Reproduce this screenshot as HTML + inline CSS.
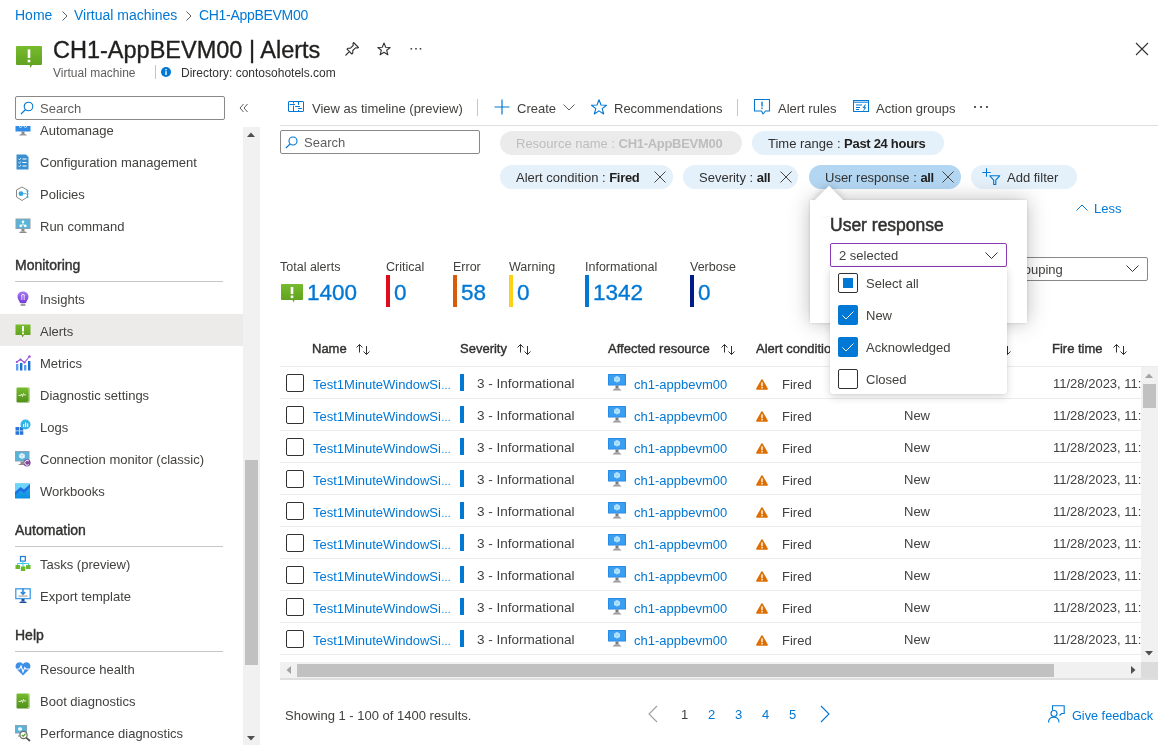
<!DOCTYPE html>
<html><head><meta charset="utf-8"><title>Alerts</title>
<style>
*{box-sizing:border-box;margin:0;padding:0}
html,body{width:1175px;height:745px;overflow:hidden;background:#fff}
body{position:relative;font-family:"Liberation Sans",sans-serif;color:#42413f;font-size:13px;-webkit-font-smoothing:antialiased}
.t{position:absolute;white-space:nowrap;line-height:16px}
.abs{position:absolute}
.blue{color:#0078d4}
.pill{position:absolute;height:24px;border-radius:12px;background:#deecf9;line-height:26px;white-space:nowrap;font-size:13px;padding-left:16px;color:#323130}
.pill b{font-weight:bold;letter-spacing:-0.3px;color:#201f1e}
.sb{-webkit-text-stroke:0.4px currentColor;color:#323130}
svg{position:absolute;overflow:visible}
</style></head><body><div id="root" style="position:absolute;left:0;top:0;width:1175px;height:745px;will-change:transform">

<div class="t blue" style="left:15px;top:7px;font-size:14px;line-height:17px">Home</div>
<svg style="left:61px;top:10px" width="8" height="12" viewBox="0 0 8 12"><path d="M1.5 1.5 L6 6 L1.5 10.5" fill="none" stroke="#605e5c" stroke-width="1"/></svg>
<div class="t blue" style="left:74px;top:7px;font-size:14px;line-height:17px">Virtual machines</div>
<svg style="left:185px;top:10px" width="8" height="12" viewBox="0 0 8 12"><path d="M1.5 1.5 L6 6 L1.5 10.5" fill="none" stroke="#605e5c" stroke-width="1"/></svg>
<div class="t blue" style="left:199px;top:7px;font-size:14px;line-height:17px;letter-spacing:-0.3px">CH1-AppBEVM00</div>
<svg style="left:16px;top:46px" width="26" height="22" viewBox="0 0 26 22"><defs><linearGradient id="g1646" x1="0" y1="0" x2="0" y2="1"><stop offset="0" stop-color="#76bc2d"/><stop offset="1" stop-color="#5e9e1e"/></linearGradient></defs><path d="M0 1 Q0 0 1 0 H25 Q26 0 26 1 V18 Q26 19 25 19 H16.1 L14.3 22 L13.8 19 H1 Q0 19 0 18 Z" fill="url(#g1646)"/><rect x="11.7" y="3.4" width="2.6" height="8.6" fill="#fff"/><rect x="11.7" y="13.7" width="2.6" height="2.6" fill="#fff"/></svg>
<div class="t" style="left:53px;top:36px;font-size:23.5px;line-height:28px;color:#201f1e;-webkit-text-stroke:0.35px #201f1e">CH1-AppBEVM00 | Alerts</div>
<svg style="left:344px;top:41px" width="16" height="16" viewBox="0 0 16 16"><path d="M9.5 1.5 L14.5 6.5 L13.5 7 L11.5 6.8 L8.8 9.5 L8.8 12 L7.8 13 L3 8.2 L4 7.2 L6.5 7.2 L9.2 4.5 L9 2.5 Z M5.3 10.7 L1.5 14.5" fill="none" stroke="#323130" stroke-width="1.1" stroke-linejoin="round"/></svg>
<svg style="left:377px;top:42px" width="14" height="14" viewBox="0 0 14 14"><path d="M7 1 L8.7 5.2 L13.2 5.5 L9.7 8.3 L10.9 12.8 L7 10.3 L3.1 12.8 L4.3 8.3 L0.8 5.5 L5.3 5.2 Z" fill="none" stroke="#323130" stroke-width="1.1" stroke-linejoin="round"/></svg>
<svg style="left:410px;top:48px" width="12" height="2" viewBox="0 0 12 2"><rect x="0.5" y="0" width="1.6" height="1.6" fill="#484644"/><rect x="5.2" y="0" width="1.6" height="1.6" fill="#484644"/><rect x="9.7" y="0" width="1.6" height="1.6" fill="#484644"/></svg>
<svg style="left:1135px;top:42px" width="14" height="14" viewBox="0 0 14 14"><path d="M1 1 L13 13 M13 1 L1 13" stroke="#323130" stroke-width="1.1"/></svg>
<div class="t" style="left:53px;top:66px;font-size:12px;line-height:15px;color:#605e5c">Virtual machine</div>
<div class="abs" style="left:155px;top:65px;width:1px;height:14px;background:#c8c6c4"></div>
<svg style="left:161px;top:67px" width="10" height="10" viewBox="0 0 10 10"><circle cx="5" cy="5" r="5" fill="#0078d4"/><rect x="4.3" y="4.2" width="1.4" height="3.8" fill="#fff"/><rect x="4.3" y="2" width="1.4" height="1.4" fill="#fff"/></svg>
<div class="t" style="left:181px;top:66px;font-size:12px;line-height:15px;color:#323130">Directory: contosohotels.com</div>
<div class="abs" style="left:15px;top:96px;width:210px;height:24px;border:1px solid #8a8886;border-radius:2px"></div>
<svg style="left:20px;top:101px" width="14" height="14" viewBox="0 0 14 14"><circle cx="8.5" cy="5.5" r="4.3" fill="none" stroke="#0078d4" stroke-width="1.1"/><path d="M5.4 8.6 L1 13" stroke="#0078d4" stroke-width="1.2"/></svg>
<div class="t" style="left:40px;top:101px;font-size:13px;color:#605e5c">Search</div>
<svg style="left:239px;top:103px" width="10" height="10" viewBox="0 0 10 10"><path d="M4.5 1 L1 5 L4.5 9 M8.5 1 L5 5 L8.5 9" fill="none" stroke="#605e5c" stroke-width="1"/></svg>
<div class="abs" style="left:243px;top:127px;width:17px;height:618px;background:#f1f1f1"></div>
<div class="abs" style="left:245px;top:460px;width:13px;height:205px;background:#c1c1c1"></div>
<svg style="left:247px;top:132px" width="8" height="5" viewBox="0 0 8 5"><path d="M0 5 L4 0.5 L8 5 Z" fill="#505050"/></svg>
<svg style="left:247px;top:736px" width="8" height="5" viewBox="0 0 8 5"><path d="M0 0 L4 4.5 L8 0 Z" fill="#505050"/></svg>
<div class="abs" style="left:0;top:314px;width:243px;height:32px;background:#edebe9"></div>
<svg style="left:15px;top:122px" width="16" height="16" viewBox="0 0 16 16"><rect x="0.5" y="0" width="15" height="9.5" fill="#2f8be6"/><path d="M3 2.5 L5.5 6 L8 3 L10.5 6 L13 2.5" stroke="#c3e3ff" stroke-width="1" fill="none"/><rect x="6.5" y="9.5" width="3" height="2.5" fill="#8a8a8a"/><path d="M4 13.5 L5.5 12 H10.5 L12 13.5 Z" fill="#9a9a9a"/></svg>
<div class="t" style="left:40px;top:123px;font-size:13px">Automanage</div>
<svg style="left:15px;top:154px" width="16" height="16" viewBox="0 0 16 16"><path d="M1.5 0.5 H11 L13.5 3 V15.5 H1.5 Z" fill="#3a8fd0"/><path d="M3.5 4.8 L4.5 5.8 L6 4 M3.5 8.3 L4.5 9.3 L6 7.5 M3.5 11.8 L4.5 12.8 L6 11" stroke="#fff" stroke-width="0.8" fill="none"/><path d="M7.5 5 H11.5 M7.5 8.5 H11.5 M7.5 12 H11.5" stroke="#fff" stroke-width="1"/></svg>
<div class="t" style="left:40px;top:155px;font-size:13px">Configuration management</div>
<svg style="left:15px;top:186px" width="16" height="16" viewBox="0 0 16 16"><path d="M7 1 L12.5 4 V11 L7 14.5 L1.5 11 V4 Z" fill="none" stroke="#8a8a8a" stroke-width="1"/><circle cx="6" cy="7.7" r="2.4" fill="#32a8e0"/><path d="M8 7.7 H11" stroke="#32a8e0" stroke-width="0.8"/><circle cx="12.5" cy="5" r="1.1" fill="#32a8e0"/><circle cx="12.5" cy="8" r="1.1" fill="#32a8e0"/><circle cx="12.5" cy="11" r="1.1" fill="#32a8e0"/></svg>
<div class="t" style="left:40px;top:187px;font-size:13px">Policies</div>
<svg style="left:15px;top:218px" width="16" height="16" viewBox="0 0 16 16"><rect x="0.5" y="0.5" width="15" height="10.5" fill="#9aa0a6"/><rect x="1.3" y="1.3" width="13.4" height="9" fill="#59b4d9"/><circle cx="8" cy="3.8" r="1.3" fill="#fff"/><circle cx="5.8" cy="7.8" r="1.4" fill="#fff"/><circle cx="10.2" cy="7.8" r="1.4" fill="#fff"/><path d="M8 5 V6.5 L6.5 7.5 M8 6.5 L9.5 7.5" stroke="#fff" stroke-width="0.7" fill="none"/><rect x="6.5" y="11" width="3" height="2.5" fill="#8a8a8a"/><path d="M4 15 L5.5 13.5 H10.5 L12 15 Z" fill="#8a8a8a"/></svg>
<div class="t" style="left:40px;top:219px;font-size:13px">Run command</div>
<svg style="left:15px;top:291px" width="16" height="16" viewBox="0 0 16 16"><defs><linearGradient id="ins" x1="0" y1="0" x2="0" y2="1"><stop offset="0" stop-color="#a77af4"/><stop offset="1" stop-color="#773adc"/></linearGradient></defs><path d="M8 0.5 C4.5 0.5 2.5 3 2.5 5.8 C2.5 8.5 4.5 10 5 12 H11 C11.5 10 13.5 8.5 13.5 5.8 C13.5 3 11.5 0.5 8 0.5 Z" fill="url(#ins)"/><rect x="5.5" y="12.5" width="5" height="2.6" rx="1" fill="#a0a0a0"/><path d="M6.5 4.5 C6.5 3 9.5 3 9.5 4.5 M6.8 4 V9 M9.2 4 V9" stroke="#fff" stroke-width="0.8" fill="none"/></svg>
<div class="t" style="left:40px;top:292px;font-size:13px">Insights</div>
<svg style="left:15px;top:323px" width="16" height="16" viewBox="0 0 16 16"><defs><linearGradient id="alg" x1="0" y1="0" x2="0" y2="1"><stop offset="0" stop-color="#76bc2d"/><stop offset="1" stop-color="#5e9e1e"/></linearGradient></defs><path d="M0.5 1.5 H15.5 V12 H9 L7.5 14.5 L6.5 12 H0.5 Z" fill="url(#alg)"/><rect x="7" y="3" width="2" height="5.5" fill="#fff"/><rect x="7" y="9.5" width="2" height="1.8" fill="#fff"/></svg>
<div class="t" style="left:40px;top:324px;font-size:13px">Alerts</div>
<svg style="left:15px;top:355px" width="16" height="16" viewBox="0 0 16 16"><rect x="1" y="9" width="2.4" height="6.5" fill="#5ea0ef"/><rect x="5" y="8" width="2.4" height="7.5" fill="#1e6fd0"/><rect x="9" y="10" width="2.4" height="5.5" fill="#5ea0ef"/><rect x="13" y="6" width="2.4" height="9.5" fill="#1e6fd0"/><path d="M1.5 7 L5.5 4.5 L9.5 7.5 L14.5 1.5" stroke="#9b4fd6" stroke-width="1.1" fill="none"/><circle cx="1.8" cy="7" r="1.1" fill="#9b4fd6"/><circle cx="5.5" cy="4.5" r="1.1" fill="#9b4fd6"/><circle cx="9.5" cy="7.5" r="1.1" fill="#9b4fd6"/><circle cx="14.5" cy="1.5" r="1.2" fill="#9b4fd6"/></svg>
<div class="t" style="left:40px;top:356px;font-size:13px">Metrics</div>
<svg style="left:15px;top:387px" width="16" height="16" viewBox="0 0 16 16"><defs><linearGradient id="dg" x1="0" y1="0" x2="0" y2="1"><stop offset="0" stop-color="#76bc2d"/><stop offset="1" stop-color="#4f8f1a"/></linearGradient></defs><rect x="1.5" y="0.5" width="13" height="15" rx="1" fill="url(#dg)"/><path d="M12.5 1.5 H14 V14.5 H12.5" stroke="#b5e08a" stroke-width="0.9" fill="none"/><path d="M3.5 8.5 L5.5 8.5 L6.5 7 L7.5 9.5 L8.5 6.5 L9.5 8 L11 8" stroke="#fff" stroke-width="0.8" fill="none"/></svg>
<div class="t" style="left:40px;top:388px;font-size:13px">Diagnostic settings</div>
<svg style="left:15px;top:419px" width="16" height="16" viewBox="0 0 16 16"><rect x="0.5" y="8" width="3.6" height="3.6" fill="#2a75d8"/><rect x="4.7" y="8" width="3.6" height="3.6" fill="#2a75d8"/><rect x="0.5" y="12.2" width="3.6" height="3.6" fill="#2a75d8"/><rect x="4.7" y="12.2" width="3.6" height="3.6" fill="#2a75d8"/><circle cx="10.5" cy="5.5" r="5" fill="#32b5e8"/><rect x="8" y="5" width="1.2" height="3" fill="#fff"/><rect x="10" y="3.5" width="1.2" height="4.5" fill="#fff"/><rect x="12" y="4.5" width="1.2" height="3.5" fill="#fff"/></svg>
<div class="t" style="left:40px;top:420px;font-size:13px">Logs</div>
<svg style="left:15px;top:451px" width="16" height="16" viewBox="0 0 16 16"><rect x="0" y="0" width="14.5" height="10.5" fill="#9aa0a6"/><rect x="0.8" y="0.8" width="13" height="9" fill="#59b4d9"/><path d="M7 2 L9.8 3.4 V6.6 L7 8 L4.2 6.6 V3.4 Z" fill="#e8f4ff"/><path d="M4.2 3.4 L7 4.8 L9.8 3.4 M7 4.8 V8" stroke="#a8d4ec" stroke-width="0.6" fill="none"/><rect x="5.5" y="10.5" width="3" height="2.5" fill="#8a8a8a"/><path d="M3 14 L4.5 13 H9.5 L10 14 Z" fill="#8a8a8a"/><circle cx="12" cy="11.8" r="3.6" fill="#804998"/><path d="M13.8 10 A2.4 2.4 0 1 0 13.8 13.6" stroke="#fff" stroke-width="1" fill="none"/></svg>
<div class="t" style="left:40px;top:452px;font-size:13px">Connection monitor (classic)</div>
<svg style="left:15px;top:483px" width="16" height="16" viewBox="0 0 16 16"><defs><linearGradient id="wb" x1="0" y1="0" x2="0" y2="1"><stop offset="0" stop-color="#28b4f0"/><stop offset="1" stop-color="#0d8ee0"/></linearGradient></defs><rect x="0" y="0.5" width="15" height="15" fill="url(#wb)"/><path d="M0 0.5 H15 V1.5 L9 7 L5.5 5 L0 10 Z" fill="#6fd6fa"/><path d="M0 9 L5.5 4 L9 6.5 L15 1 V4.5 L9 10 L5.5 7.5 L0 12.5 Z" fill="#1f6fe0"/></svg>
<div class="t" style="left:40px;top:484px;font-size:13px">Workbooks</div>
<svg style="left:15px;top:556px" width="16" height="16" viewBox="0 0 16 16"><rect x="5.5" y="0.5" width="4.8" height="4.6" fill="none" stroke="#1f78d8" stroke-width="1.2"/><path d="M8 5 V11 M2.5 10 V7.5 H13.5 V10" stroke="#38c8f0" stroke-width="1" fill="none"/><rect x="0.5" y="9" width="4.5" height="4" fill="#6bb830"/><rect x="5.8" y="10.5" width="4.5" height="4.5" fill="#6bb830"/><rect x="11" y="9" width="4.5" height="4" fill="#6bb830"/></svg>
<div class="t" style="left:40px;top:557px;font-size:13px">Tasks (preview)</div>
<svg style="left:15px;top:588px" width="16" height="16" viewBox="0 0 16 16"><rect x="0.8" y="0.8" width="14.4" height="9.8" fill="#fff" stroke="#3c9be8" stroke-width="1.3"/><path d="M8 0.5 V6 M5.8 4 L8 6.3 L10.2 4" stroke="#2c8be0" stroke-width="1.6" fill="none"/><rect x="3.5" y="7.5" width="9" height="1.2" fill="#b0a8a0"/><rect x="6.5" y="11" width="3" height="2.5" fill="#1d4fa0"/><path d="M4 15 L5.5 13.5 H10.5 L12 15 Z" fill="#1d4fa0"/></svg>
<div class="t" style="left:40px;top:589px;font-size:13px">Export template</div>
<svg style="left:15px;top:661px" width="16" height="16" viewBox="0 0 16 16"><path d="M8 14.5 L1.8 8.3 C-0.3 6.2 0.3 1.8 4 1.2 C6 0.9 7.2 2 8 3 C8.8 2 10 0.9 12 1.2 C15.7 1.8 16.3 6.2 14.2 8.3 Z" fill="#3e8fe8"/><path d="M1.5 8 H4.5 L6 5 L8 11 L9.8 6.5 L11 8 H14.5" stroke="#fff" stroke-width="1.1" fill="none"/></svg>
<div class="t" style="left:40px;top:662px;font-size:13px">Resource health</div>
<svg style="left:15px;top:693px" width="16" height="16" viewBox="0 0 16 16"><defs><linearGradient id="dg" x1="0" y1="0" x2="0" y2="1"><stop offset="0" stop-color="#76bc2d"/><stop offset="1" stop-color="#4f8f1a"/></linearGradient></defs><rect x="1.5" y="0.5" width="13" height="15" rx="1" fill="url(#dg)"/><path d="M12.5 1.5 H14 V14.5 H12.5" stroke="#b5e08a" stroke-width="0.9" fill="none"/><path d="M3.5 8.5 L5.5 8.5 L6.5 7 L7.5 9.5 L8.5 6.5 L9.5 8 L11 8" stroke="#fff" stroke-width="0.8" fill="none"/></svg>
<div class="t" style="left:40px;top:694px;font-size:13px">Boot diagnostics</div>
<svg style="left:15px;top:725px" width="16" height="16" viewBox="0 0 16 16"><rect x="0" y="0" width="12" height="8.5" fill="#9aa0a6"/><rect x="0.7" y="0.7" width="10.6" height="7.1" fill="#59b4d9"/><path d="M5 2 L7 3 V5 L5 6 L3 5 V3 Z" fill="#e8f4ff"/><rect x="3" y="10.5" width="3" height="1" fill="#8a8a8a"/><circle cx="8.5" cy="10" r="3.6" fill="#fff" stroke="#6b6b6b" stroke-width="1.2"/><path d="M11.2 12.7 L15 16" stroke="#505050" stroke-width="1.7"/><path d="M6.8 10 L8.2 11.3 L10.5 8.8" stroke="#5ea72e" stroke-width="1.3" fill="none"/></svg>
<div class="t" style="left:40px;top:726px;font-size:13px">Performance diagnostics</div>
<div class="abs" style="left:0;top:120px;width:243px;height:6px;background:#fff"></div>
<div class="t sb" style="left:15px;top:257px;font-size:14px">Monitoring</div>
<div class="abs" style="left:15px;top:281px;width:208px;height:1px;background:#c8c6c4"></div>
<div class="t sb" style="left:15px;top:522px;font-size:14px">Automation</div>
<div class="abs" style="left:15px;top:546px;width:208px;height:1px;background:#c8c6c4"></div>
<div class="t sb" style="left:15px;top:627px;font-size:14px">Help</div>
<div class="abs" style="left:15px;top:651px;width:208px;height:1px;background:#c8c6c4"></div>
<svg style="left:288px;top:101px" width="16" height="11" viewBox="0 0 16 11"><rect x="0.5" y="0.5" width="15" height="10" rx="0.5" fill="none" stroke="#0078d4" stroke-width="1"/><path d="M5.5 0.5 V2 M5.5 5 V10.5 M10.5 0.5 V3.5 M10.5 9.5 V10.5 M2 3.5 H6.5 M7.5 5.5 H11.5 M10.5 7.5 H13.5" stroke="#0078d4" stroke-width="1" fill="none" stroke-linecap="round"/></svg>
<div class="t" style="left:312px;top:101px">View as timeline (preview)</div>
<div class="abs" style="left:477px;top:99px;width:1px;height:17px;background:#c8c6c4"></div>
<svg style="left:494px;top:99px" width="16" height="16" viewBox="0 0 16 16"><path d="M8 0.5 V15.5 M0.5 8 H15.5" stroke="#0078d4" stroke-width="1.2"/></svg>
<div class="t" style="left:517px;top:101px">Create</div>
<svg style="left:563px;top:104px" width="12" height="7" viewBox="0 0 12 7"><path d="M0.5 0.5 L6 6 L11.5 0.5" fill="none" stroke="#605e5c" stroke-width="1"/></svg>
<svg style="left:591px;top:99px" width="16" height="16" viewBox="0 0 16 16"><path d="M8 0.8 L10 6 L15.5 6.2 L11.2 9.6 L12.7 15 L8 11.9 L3.3 15 L4.8 9.6 L0.5 6.2 L6 6 Z" fill="none" stroke="#0078d4" stroke-width="1.1" stroke-linejoin="round"/></svg>
<div class="t" style="left:614px;top:101px">Recommendations</div>
<div class="abs" style="left:737px;top:99px;width:1px;height:17px;background:#c8c6c4"></div>
<svg style="left:753px;top:98px" width="18" height="18" viewBox="0 0 18 18"><path d="M1.5 1.5 H16.5 V13 H12.5 L10 16 L8.5 13 H1.5 Z" fill="none" stroke="#0078d4" stroke-width="1.1" stroke-linejoin="round"/><path d="M9 3.8 V8.5" stroke="#0078d4" stroke-width="1.4"/><rect x="8.3" y="9.6" width="1.4" height="1.5" fill="#0078d4"/></svg>
<div class="t" style="left:778px;top:101px">Alert rules</div>
<svg style="left:853px;top:100px" width="16" height="13" viewBox="0 0 16 13"><rect x="0.5" y="0.5" width="15" height="11" fill="none" stroke="#0078d4" stroke-width="1"/><path d="M0.5 2.2 H15.5" stroke="#0078d4" stroke-width="1"/><path d="M3 5 H9 M3 7.5 H7 M3 9.5 H6" stroke="#0078d4" stroke-width="1"/><path d="M12 4.5 L9.5 8 H11.5 L9.5 12 L13.5 7.2 H11.5 L13 4.5 Z" fill="#0078d4"/></svg>
<div class="t" style="left:876px;top:101px">Action groups</div>
<svg style="left:974px;top:106px" width="14" height="2" viewBox="0 0 14 2"><rect x="0" y="0" width="2" height="2" fill="#605e5c"/><rect x="6" y="0" width="2" height="2" fill="#605e5c"/><rect x="12" y="0" width="2" height="2" fill="#605e5c"/></svg>
<div class="abs" style="left:280px;top:125px;width:878px;height:1px;background:#e1dfdd"></div>
<div class="abs" style="left:280px;top:130px;width:200px;height:24px;border:1px solid #8a8886;border-radius:2px"></div>
<svg style="left:285px;top:136px" width="13" height="13" viewBox="0 0 13 13"><circle cx="8" cy="5" r="4" fill="none" stroke="#0078d4" stroke-width="1.1"/><path d="M5.1 7.9 L1 12" stroke="#0078d4" stroke-width="1.2"/></svg>
<div class="t" style="left:304px;top:135px;color:#605e5c">Search</div>
<div class="pill" style="left:500px;top:131px;width:242px;background:#ebebeb;color:#bdbdbd">Resource name : <b style="color:#bdbdbd">CH1-AppBEVM00</b></div>
<div class="pill" style="left:752px;top:131px;width:192px;background:#e4f0fa">Time range : <b>Past 24 hours</b></div>
<div class="pill" style="left:500px;top:165px;width:173px;background:#e4f0fa">Alert condition : <b>Fired</b></div>
<svg style="left:654px;top:171px" width="12" height="12" viewBox="0 0 12 12"><path d="M0.5 0.5 L11.5 11.5 M11.5 0.5 L0.5 11.5" stroke="#484644" stroke-width="1"/></svg>
<div class="pill" style="left:683px;top:165px;width:115px;background:#e4f0fa">Severity : <b>all</b></div>
<svg style="left:780px;top:171px" width="12" height="12" viewBox="0 0 12 12"><path d="M0.5 0.5 L11.5 11.5 M11.5 0.5 L0.5 11.5" stroke="#484644" stroke-width="1"/></svg>
<div class="pill" style="left:809px;top:165px;width:152px;background:#b3d6f2">User response : <b>all</b></div>
<svg style="left:942px;top:171px" width="12" height="12" viewBox="0 0 12 12"><path d="M0.5 0.5 L11.5 11.5 M11.5 0.5 L0.5 11.5" stroke="#484644" stroke-width="1"/></svg>
<div class="pill" style="left:971px;top:165px;width:106px;background:#e4f0fa;padding-left:36px">Add filter</div>
<svg style="left:982px;top:168px" width="19" height="17" viewBox="0 0 19 17"><path d="M4.5 0.3 V8.7 M0.3 4.5 H8.7" stroke="#0078d4" stroke-width="1.1"/><path d="M7.8 7.8 H17.7 L13.8 12.2 V16.5 H11.7 V12.2 Z" fill="none" stroke="#0078d4" stroke-width="1.1" stroke-linejoin="round"/></svg>
<svg style="left:1076px;top:204px" width="12" height="7" viewBox="0 0 12 7"><path d="M0.5 6.5 L6 1 L11.5 6.5" fill="none" stroke="#0078d4" stroke-width="1"/></svg>
<div class="t blue" style="left:1094px;top:201px">Less</div>
<div class="t" style="left:280px;top:260px;font-size:12.5px;line-height:15px">Total alerts</div>
<svg style="left:281px;top:284px" width="22" height="18.5" viewBox="0 0 22 18.5"><defs><linearGradient id="g281284" x1="0" y1="0" x2="0" y2="1"><stop offset="0" stop-color="#76bc2d"/><stop offset="1" stop-color="#5e9e1e"/></linearGradient></defs><path d="M0 1 Q0 0 1 0 H21 Q22 0 22 1 V15 Q22 16 21 16 H13.6 L12.1 18.5 L11.7 16 H1 Q0 16 0 15 Z" fill="url(#g281284)"/><rect x="9.7" y="2.9" width="2.6" height="7.2" fill="#fff"/><rect x="9.7" y="11.5" width="2.6" height="2.6" fill="#fff"/></svg>
<div class="t blue" style="left:307px;top:280px;font-size:22.5px;line-height:26px;-webkit-text-stroke:0.35px #0078d4">1400</div>
<div class="t" style="left:386px;top:260px;font-size:12.5px;line-height:15px">Critical</div>
<div class="abs" style="left:386px;top:275px;width:4px;height:32px;background:#e00b1c"></div>
<div class="t blue" style="left:394px;top:280px;font-size:22.5px;line-height:26px;-webkit-text-stroke:0.35px #0078d4">0</div>
<div class="t" style="left:453px;top:260px;font-size:12.5px;line-height:15px">Error</div>
<div class="abs" style="left:453px;top:275px;width:4px;height:32px;background:#d85b0b"></div>
<div class="t blue" style="left:461px;top:280px;font-size:22.5px;line-height:26px;-webkit-text-stroke:0.35px #0078d4">58</div>
<div class="t" style="left:509px;top:260px;font-size:12.5px;line-height:15px">Warning</div>
<div class="abs" style="left:509px;top:275px;width:4px;height:32px;background:#fcd116"></div>
<div class="t blue" style="left:517px;top:280px;font-size:22.5px;line-height:26px;-webkit-text-stroke:0.35px #0078d4">0</div>
<div class="t" style="left:585px;top:260px;font-size:12.5px;line-height:15px">Informational</div>
<div class="abs" style="left:585px;top:275px;width:4px;height:32px;background:#0078d4"></div>
<div class="t blue" style="left:593px;top:280px;font-size:22.5px;line-height:26px;-webkit-text-stroke:0.35px #0078d4">1342</div>
<div class="t" style="left:690px;top:260px;font-size:12.5px;line-height:15px">Verbose</div>
<div class="abs" style="left:690px;top:275px;width:4px;height:32px;background:#001c8a"></div>
<div class="t blue" style="left:698px;top:280px;font-size:22.5px;line-height:26px;-webkit-text-stroke:0.35px #0078d4">0</div>
<div class="abs" style="left:982px;top:257px;width:166px;height:24px;border:1px solid #8a8886;border-radius:2px"></div>
<div class="t" style="left:992px;top:262px">No grouping</div>
<svg style="left:1126px;top:265px" width="13" height="8" viewBox="0 0 13 8"><path d="M0.5 0.5 L6.5 6.5 L12.5 0.5" fill="none" stroke="#323130" stroke-width="1"/></svg>
<div class="t sb" style="left:312px;top:341px;font-size:13px">Name</div>
<svg style="left:355px;top:344px" width="17" height="12" viewBox="0 0 17 12"><path d="M4.5 0.5 V8.5 M1.5 3.5 L4.5 0.5 L7.5 3.5" fill="none" stroke="#323130" stroke-width="1"/><path d="M11.5 2 V10.5 M8.5 7.5 L11.5 10.5 L14.5 7.5" fill="none" stroke="#323130" stroke-width="1"/></svg>
<div class="t sb" style="left:460px;top:341px;font-size:13px">Severity</div>
<svg style="left:516px;top:344px" width="17" height="12" viewBox="0 0 17 12"><path d="M4.5 0.5 V8.5 M1.5 3.5 L4.5 0.5 L7.5 3.5" fill="none" stroke="#323130" stroke-width="1"/><path d="M11.5 2 V10.5 M8.5 7.5 L11.5 10.5 L14.5 7.5" fill="none" stroke="#323130" stroke-width="1"/></svg>
<div class="t sb" style="left:608px;top:341px;font-size:13px">Affected resource</div>
<svg style="left:720px;top:344px" width="17" height="12" viewBox="0 0 17 12"><path d="M4.5 0.5 V8.5 M1.5 3.5 L4.5 0.5 L7.5 3.5" fill="none" stroke="#323130" stroke-width="1"/><path d="M11.5 2 V10.5 M8.5 7.5 L11.5 10.5 L14.5 7.5" fill="none" stroke="#323130" stroke-width="1"/></svg>
<div class="t sb" style="left:756px;top:341px;font-size:13px">Alert condition</div>
<svg style="left:856px;top:344px" width="17" height="12" viewBox="0 0 17 12"><path d="M4.5 0.5 V8.5 M1.5 3.5 L4.5 0.5 L7.5 3.5" fill="none" stroke="#323130" stroke-width="1"/><path d="M11.5 2 V10.5 M8.5 7.5 L11.5 10.5 L14.5 7.5" fill="none" stroke="#323130" stroke-width="1"/></svg>
<div class="t sb" style="left:904px;top:341px;font-size:13px">User response</div>
<svg style="left:996px;top:344px" width="17" height="12" viewBox="0 0 17 12"><path d="M4.5 0.5 V8.5 M1.5 3.5 L4.5 0.5 L7.5 3.5" fill="none" stroke="#323130" stroke-width="1"/><path d="M11.5 2 V10.5 M8.5 7.5 L11.5 10.5 L14.5 7.5" fill="none" stroke="#323130" stroke-width="1"/></svg>
<div class="t sb" style="left:1052px;top:341px;font-size:13px">Fire time</div>
<svg style="left:1112px;top:344px" width="17" height="12" viewBox="0 0 17 12"><path d="M4.5 0.5 V8.5 M1.5 3.5 L4.5 0.5 L7.5 3.5" fill="none" stroke="#323130" stroke-width="1"/><path d="M11.5 2 V10.5 M8.5 7.5 L11.5 10.5 L14.5 7.5" fill="none" stroke="#323130" stroke-width="1"/></svg>
<div class="abs" style="left:280px;top:366px;width:878px;height:1px;background:#edebe9"></div>
<div class="abs" style="left:280px;top:367px;width:861px;height:295px;overflow:hidden">
<div class="abs" style="left:6px;top:7px;width:18px;height:18px;border:1.5px solid #323130;border-radius:2px"></div>
<div class="t blue" style="left:33px;top:10px">Test1MinuteWindowSi<span style="font-size:10px">&hellip;</span></div>
<div class="abs" style="left:180px;top:7px;width:4px;height:17px;background:#0078d4"></div>
<div class="t" style="left:197px;top:9px;font-size:13.5px">3 - Informational</div>
<svg style="left:328px;top:7px" width="18" height="17" viewBox="0 0 18 17"><rect x="0" y="0" width="18" height="11.5" rx="0.6" fill="#1e88e5"/><rect x="0.8" y="0.8" width="16.4" height="9.9" fill="#3a9ff0"/><path d="M9 2 L12 3.5 V7 L9 8.6 L6 7 V3.5 Z" fill="#b8e4ff"/><path d="M6 3.5 L9 5 L12 3.5 M9 5 V8.6" stroke="#7cc9f5" stroke-width="0.6" fill="none"/><rect x="7.5" y="11.5" width="3" height="3" fill="#7a7a7a"/><path d="M4.5 16.5 L6.5 14.5 H11.5 L13.5 16.5 Z" fill="#9a9a9a"/></svg>
<div class="t blue" style="left:354px;top:10px">ch1-appbevm00</div>
<svg style="left:476px;top:12px" width="12" height="11" viewBox="0 0 12 11"><path d="M6 0.3 Q6.5 0.3 6.8 0.8 L11.8 9.6 Q12 10.7 11 10.7 H1 Q0 10.7 0.2 9.6 L5.2 0.8 Q5.5 0.3 6 0.3 Z" fill="#db6f00"/><rect x="5.3" y="3.3" width="1.4" height="4" fill="#fff"/><rect x="5.3" y="8.1" width="1.4" height="1.4" fill="#fff"/></svg>
<div class="t" style="left:502px;top:10px">Fired</div>
<div class="t" style="left:624px;top:9px">New</div>
<div class="t" style="left:773px;top:9px">11/28/2023, 11:00 AM</div>
<div class="abs" style="left:0;top:31px;width:861px;height:1px;background:#edebe9"></div>
<div class="abs" style="left:6px;top:39px;width:18px;height:18px;border:1.5px solid #323130;border-radius:2px"></div>
<div class="t blue" style="left:33px;top:42px">Test1MinuteWindowSi<span style="font-size:10px">&hellip;</span></div>
<div class="abs" style="left:180px;top:39px;width:4px;height:17px;background:#0078d4"></div>
<div class="t" style="left:197px;top:41px;font-size:13.5px">3 - Informational</div>
<svg style="left:328px;top:39px" width="18" height="17" viewBox="0 0 18 17"><rect x="0" y="0" width="18" height="11.5" rx="0.6" fill="#1e88e5"/><rect x="0.8" y="0.8" width="16.4" height="9.9" fill="#3a9ff0"/><path d="M9 2 L12 3.5 V7 L9 8.6 L6 7 V3.5 Z" fill="#b8e4ff"/><path d="M6 3.5 L9 5 L12 3.5 M9 5 V8.6" stroke="#7cc9f5" stroke-width="0.6" fill="none"/><rect x="7.5" y="11.5" width="3" height="3" fill="#7a7a7a"/><path d="M4.5 16.5 L6.5 14.5 H11.5 L13.5 16.5 Z" fill="#9a9a9a"/></svg>
<div class="t blue" style="left:354px;top:42px">ch1-appbevm00</div>
<svg style="left:476px;top:44px" width="12" height="11" viewBox="0 0 12 11"><path d="M6 0.3 Q6.5 0.3 6.8 0.8 L11.8 9.6 Q12 10.7 11 10.7 H1 Q0 10.7 0.2 9.6 L5.2 0.8 Q5.5 0.3 6 0.3 Z" fill="#db6f00"/><rect x="5.3" y="3.3" width="1.4" height="4" fill="#fff"/><rect x="5.3" y="8.1" width="1.4" height="1.4" fill="#fff"/></svg>
<div class="t" style="left:502px;top:42px">Fired</div>
<div class="t" style="left:624px;top:41px">New</div>
<div class="t" style="left:773px;top:41px">11/28/2023, 11:00 AM</div>
<div class="abs" style="left:0;top:63px;width:861px;height:1px;background:#edebe9"></div>
<div class="abs" style="left:6px;top:71px;width:18px;height:18px;border:1.5px solid #323130;border-radius:2px"></div>
<div class="t blue" style="left:33px;top:74px">Test1MinuteWindowSi<span style="font-size:10px">&hellip;</span></div>
<div class="abs" style="left:180px;top:71px;width:4px;height:17px;background:#0078d4"></div>
<div class="t" style="left:197px;top:73px;font-size:13.5px">3 - Informational</div>
<svg style="left:328px;top:71px" width="18" height="17" viewBox="0 0 18 17"><rect x="0" y="0" width="18" height="11.5" rx="0.6" fill="#1e88e5"/><rect x="0.8" y="0.8" width="16.4" height="9.9" fill="#3a9ff0"/><path d="M9 2 L12 3.5 V7 L9 8.6 L6 7 V3.5 Z" fill="#b8e4ff"/><path d="M6 3.5 L9 5 L12 3.5 M9 5 V8.6" stroke="#7cc9f5" stroke-width="0.6" fill="none"/><rect x="7.5" y="11.5" width="3" height="3" fill="#7a7a7a"/><path d="M4.5 16.5 L6.5 14.5 H11.5 L13.5 16.5 Z" fill="#9a9a9a"/></svg>
<div class="t blue" style="left:354px;top:74px">ch1-appbevm00</div>
<svg style="left:476px;top:76px" width="12" height="11" viewBox="0 0 12 11"><path d="M6 0.3 Q6.5 0.3 6.8 0.8 L11.8 9.6 Q12 10.7 11 10.7 H1 Q0 10.7 0.2 9.6 L5.2 0.8 Q5.5 0.3 6 0.3 Z" fill="#db6f00"/><rect x="5.3" y="3.3" width="1.4" height="4" fill="#fff"/><rect x="5.3" y="8.1" width="1.4" height="1.4" fill="#fff"/></svg>
<div class="t" style="left:502px;top:74px">Fired</div>
<div class="t" style="left:624px;top:73px">New</div>
<div class="t" style="left:773px;top:73px">11/28/2023, 11:00 AM</div>
<div class="abs" style="left:0;top:95px;width:861px;height:1px;background:#edebe9"></div>
<div class="abs" style="left:6px;top:103px;width:18px;height:18px;border:1.5px solid #323130;border-radius:2px"></div>
<div class="t blue" style="left:33px;top:106px">Test1MinuteWindowSi<span style="font-size:10px">&hellip;</span></div>
<div class="abs" style="left:180px;top:103px;width:4px;height:17px;background:#0078d4"></div>
<div class="t" style="left:197px;top:105px;font-size:13.5px">3 - Informational</div>
<svg style="left:328px;top:103px" width="18" height="17" viewBox="0 0 18 17"><rect x="0" y="0" width="18" height="11.5" rx="0.6" fill="#1e88e5"/><rect x="0.8" y="0.8" width="16.4" height="9.9" fill="#3a9ff0"/><path d="M9 2 L12 3.5 V7 L9 8.6 L6 7 V3.5 Z" fill="#b8e4ff"/><path d="M6 3.5 L9 5 L12 3.5 M9 5 V8.6" stroke="#7cc9f5" stroke-width="0.6" fill="none"/><rect x="7.5" y="11.5" width="3" height="3" fill="#7a7a7a"/><path d="M4.5 16.5 L6.5 14.5 H11.5 L13.5 16.5 Z" fill="#9a9a9a"/></svg>
<div class="t blue" style="left:354px;top:106px">ch1-appbevm00</div>
<svg style="left:476px;top:108px" width="12" height="11" viewBox="0 0 12 11"><path d="M6 0.3 Q6.5 0.3 6.8 0.8 L11.8 9.6 Q12 10.7 11 10.7 H1 Q0 10.7 0.2 9.6 L5.2 0.8 Q5.5 0.3 6 0.3 Z" fill="#db6f00"/><rect x="5.3" y="3.3" width="1.4" height="4" fill="#fff"/><rect x="5.3" y="8.1" width="1.4" height="1.4" fill="#fff"/></svg>
<div class="t" style="left:502px;top:106px">Fired</div>
<div class="t" style="left:624px;top:105px">New</div>
<div class="t" style="left:773px;top:105px">11/28/2023, 11:00 AM</div>
<div class="abs" style="left:0;top:127px;width:861px;height:1px;background:#edebe9"></div>
<div class="abs" style="left:6px;top:135px;width:18px;height:18px;border:1.5px solid #323130;border-radius:2px"></div>
<div class="t blue" style="left:33px;top:138px">Test1MinuteWindowSi<span style="font-size:10px">&hellip;</span></div>
<div class="abs" style="left:180px;top:135px;width:4px;height:17px;background:#0078d4"></div>
<div class="t" style="left:197px;top:137px;font-size:13.5px">3 - Informational</div>
<svg style="left:328px;top:135px" width="18" height="17" viewBox="0 0 18 17"><rect x="0" y="0" width="18" height="11.5" rx="0.6" fill="#1e88e5"/><rect x="0.8" y="0.8" width="16.4" height="9.9" fill="#3a9ff0"/><path d="M9 2 L12 3.5 V7 L9 8.6 L6 7 V3.5 Z" fill="#b8e4ff"/><path d="M6 3.5 L9 5 L12 3.5 M9 5 V8.6" stroke="#7cc9f5" stroke-width="0.6" fill="none"/><rect x="7.5" y="11.5" width="3" height="3" fill="#7a7a7a"/><path d="M4.5 16.5 L6.5 14.5 H11.5 L13.5 16.5 Z" fill="#9a9a9a"/></svg>
<div class="t blue" style="left:354px;top:138px">ch1-appbevm00</div>
<svg style="left:476px;top:140px" width="12" height="11" viewBox="0 0 12 11"><path d="M6 0.3 Q6.5 0.3 6.8 0.8 L11.8 9.6 Q12 10.7 11 10.7 H1 Q0 10.7 0.2 9.6 L5.2 0.8 Q5.5 0.3 6 0.3 Z" fill="#db6f00"/><rect x="5.3" y="3.3" width="1.4" height="4" fill="#fff"/><rect x="5.3" y="8.1" width="1.4" height="1.4" fill="#fff"/></svg>
<div class="t" style="left:502px;top:138px">Fired</div>
<div class="t" style="left:624px;top:137px">New</div>
<div class="t" style="left:773px;top:137px">11/28/2023, 11:00 AM</div>
<div class="abs" style="left:0;top:159px;width:861px;height:1px;background:#edebe9"></div>
<div class="abs" style="left:6px;top:167px;width:18px;height:18px;border:1.5px solid #323130;border-radius:2px"></div>
<div class="t blue" style="left:33px;top:170px">Test1MinuteWindowSi<span style="font-size:10px">&hellip;</span></div>
<div class="abs" style="left:180px;top:167px;width:4px;height:17px;background:#0078d4"></div>
<div class="t" style="left:197px;top:169px;font-size:13.5px">3 - Informational</div>
<svg style="left:328px;top:167px" width="18" height="17" viewBox="0 0 18 17"><rect x="0" y="0" width="18" height="11.5" rx="0.6" fill="#1e88e5"/><rect x="0.8" y="0.8" width="16.4" height="9.9" fill="#3a9ff0"/><path d="M9 2 L12 3.5 V7 L9 8.6 L6 7 V3.5 Z" fill="#b8e4ff"/><path d="M6 3.5 L9 5 L12 3.5 M9 5 V8.6" stroke="#7cc9f5" stroke-width="0.6" fill="none"/><rect x="7.5" y="11.5" width="3" height="3" fill="#7a7a7a"/><path d="M4.5 16.5 L6.5 14.5 H11.5 L13.5 16.5 Z" fill="#9a9a9a"/></svg>
<div class="t blue" style="left:354px;top:170px">ch1-appbevm00</div>
<svg style="left:476px;top:172px" width="12" height="11" viewBox="0 0 12 11"><path d="M6 0.3 Q6.5 0.3 6.8 0.8 L11.8 9.6 Q12 10.7 11 10.7 H1 Q0 10.7 0.2 9.6 L5.2 0.8 Q5.5 0.3 6 0.3 Z" fill="#db6f00"/><rect x="5.3" y="3.3" width="1.4" height="4" fill="#fff"/><rect x="5.3" y="8.1" width="1.4" height="1.4" fill="#fff"/></svg>
<div class="t" style="left:502px;top:170px">Fired</div>
<div class="t" style="left:624px;top:169px">New</div>
<div class="t" style="left:773px;top:169px">11/28/2023, 11:00 AM</div>
<div class="abs" style="left:0;top:191px;width:861px;height:1px;background:#edebe9"></div>
<div class="abs" style="left:6px;top:199px;width:18px;height:18px;border:1.5px solid #323130;border-radius:2px"></div>
<div class="t blue" style="left:33px;top:202px">Test1MinuteWindowSi<span style="font-size:10px">&hellip;</span></div>
<div class="abs" style="left:180px;top:199px;width:4px;height:17px;background:#0078d4"></div>
<div class="t" style="left:197px;top:201px;font-size:13.5px">3 - Informational</div>
<svg style="left:328px;top:199px" width="18" height="17" viewBox="0 0 18 17"><rect x="0" y="0" width="18" height="11.5" rx="0.6" fill="#1e88e5"/><rect x="0.8" y="0.8" width="16.4" height="9.9" fill="#3a9ff0"/><path d="M9 2 L12 3.5 V7 L9 8.6 L6 7 V3.5 Z" fill="#b8e4ff"/><path d="M6 3.5 L9 5 L12 3.5 M9 5 V8.6" stroke="#7cc9f5" stroke-width="0.6" fill="none"/><rect x="7.5" y="11.5" width="3" height="3" fill="#7a7a7a"/><path d="M4.5 16.5 L6.5 14.5 H11.5 L13.5 16.5 Z" fill="#9a9a9a"/></svg>
<div class="t blue" style="left:354px;top:202px">ch1-appbevm00</div>
<svg style="left:476px;top:204px" width="12" height="11" viewBox="0 0 12 11"><path d="M6 0.3 Q6.5 0.3 6.8 0.8 L11.8 9.6 Q12 10.7 11 10.7 H1 Q0 10.7 0.2 9.6 L5.2 0.8 Q5.5 0.3 6 0.3 Z" fill="#db6f00"/><rect x="5.3" y="3.3" width="1.4" height="4" fill="#fff"/><rect x="5.3" y="8.1" width="1.4" height="1.4" fill="#fff"/></svg>
<div class="t" style="left:502px;top:202px">Fired</div>
<div class="t" style="left:624px;top:201px">New</div>
<div class="t" style="left:773px;top:201px">11/28/2023, 11:00 AM</div>
<div class="abs" style="left:0;top:223px;width:861px;height:1px;background:#edebe9"></div>
<div class="abs" style="left:6px;top:231px;width:18px;height:18px;border:1.5px solid #323130;border-radius:2px"></div>
<div class="t blue" style="left:33px;top:234px">Test1MinuteWindowSi<span style="font-size:10px">&hellip;</span></div>
<div class="abs" style="left:180px;top:231px;width:4px;height:17px;background:#0078d4"></div>
<div class="t" style="left:197px;top:233px;font-size:13.5px">3 - Informational</div>
<svg style="left:328px;top:231px" width="18" height="17" viewBox="0 0 18 17"><rect x="0" y="0" width="18" height="11.5" rx="0.6" fill="#1e88e5"/><rect x="0.8" y="0.8" width="16.4" height="9.9" fill="#3a9ff0"/><path d="M9 2 L12 3.5 V7 L9 8.6 L6 7 V3.5 Z" fill="#b8e4ff"/><path d="M6 3.5 L9 5 L12 3.5 M9 5 V8.6" stroke="#7cc9f5" stroke-width="0.6" fill="none"/><rect x="7.5" y="11.5" width="3" height="3" fill="#7a7a7a"/><path d="M4.5 16.5 L6.5 14.5 H11.5 L13.5 16.5 Z" fill="#9a9a9a"/></svg>
<div class="t blue" style="left:354px;top:234px">ch1-appbevm00</div>
<svg style="left:476px;top:236px" width="12" height="11" viewBox="0 0 12 11"><path d="M6 0.3 Q6.5 0.3 6.8 0.8 L11.8 9.6 Q12 10.7 11 10.7 H1 Q0 10.7 0.2 9.6 L5.2 0.8 Q5.5 0.3 6 0.3 Z" fill="#db6f00"/><rect x="5.3" y="3.3" width="1.4" height="4" fill="#fff"/><rect x="5.3" y="8.1" width="1.4" height="1.4" fill="#fff"/></svg>
<div class="t" style="left:502px;top:234px">Fired</div>
<div class="t" style="left:624px;top:233px">New</div>
<div class="t" style="left:773px;top:233px">11/28/2023, 11:00 AM</div>
<div class="abs" style="left:0;top:255px;width:861px;height:1px;background:#edebe9"></div>
<div class="abs" style="left:6px;top:263px;width:18px;height:18px;border:1.5px solid #323130;border-radius:2px"></div>
<div class="t blue" style="left:33px;top:266px">Test1MinuteWindowSi<span style="font-size:10px">&hellip;</span></div>
<div class="abs" style="left:180px;top:263px;width:4px;height:17px;background:#0078d4"></div>
<div class="t" style="left:197px;top:265px;font-size:13.5px">3 - Informational</div>
<svg style="left:328px;top:263px" width="18" height="17" viewBox="0 0 18 17"><rect x="0" y="0" width="18" height="11.5" rx="0.6" fill="#1e88e5"/><rect x="0.8" y="0.8" width="16.4" height="9.9" fill="#3a9ff0"/><path d="M9 2 L12 3.5 V7 L9 8.6 L6 7 V3.5 Z" fill="#b8e4ff"/><path d="M6 3.5 L9 5 L12 3.5 M9 5 V8.6" stroke="#7cc9f5" stroke-width="0.6" fill="none"/><rect x="7.5" y="11.5" width="3" height="3" fill="#7a7a7a"/><path d="M4.5 16.5 L6.5 14.5 H11.5 L13.5 16.5 Z" fill="#9a9a9a"/></svg>
<div class="t blue" style="left:354px;top:266px">ch1-appbevm00</div>
<svg style="left:476px;top:268px" width="12" height="11" viewBox="0 0 12 11"><path d="M6 0.3 Q6.5 0.3 6.8 0.8 L11.8 9.6 Q12 10.7 11 10.7 H1 Q0 10.7 0.2 9.6 L5.2 0.8 Q5.5 0.3 6 0.3 Z" fill="#db6f00"/><rect x="5.3" y="3.3" width="1.4" height="4" fill="#fff"/><rect x="5.3" y="8.1" width="1.4" height="1.4" fill="#fff"/></svg>
<div class="t" style="left:502px;top:266px">Fired</div>
<div class="t" style="left:624px;top:265px">New</div>
<div class="t" style="left:773px;top:265px">11/28/2023, 11:00 AM</div>
<div class="abs" style="left:0;top:287px;width:861px;height:1px;background:#edebe9"></div>
<div class="abs" style="left:6px;top:295px;width:18px;height:18px;border:1.5px solid #323130;border-radius:2px"></div>
<div class="t blue" style="left:33px;top:298px">Test1MinuteWindowSi<span style="font-size:10px">&hellip;</span></div>
<div class="abs" style="left:180px;top:295px;width:4px;height:17px;background:#0078d4"></div>
<div class="t" style="left:197px;top:297px;font-size:13.5px">3 - Informational</div>
<svg style="left:328px;top:295px" width="18" height="17" viewBox="0 0 18 17"><rect x="0" y="0" width="18" height="11.5" rx="0.6" fill="#1e88e5"/><rect x="0.8" y="0.8" width="16.4" height="9.9" fill="#3a9ff0"/><path d="M9 2 L12 3.5 V7 L9 8.6 L6 7 V3.5 Z" fill="#b8e4ff"/><path d="M6 3.5 L9 5 L12 3.5 M9 5 V8.6" stroke="#7cc9f5" stroke-width="0.6" fill="none"/><rect x="7.5" y="11.5" width="3" height="3" fill="#7a7a7a"/><path d="M4.5 16.5 L6.5 14.5 H11.5 L13.5 16.5 Z" fill="#9a9a9a"/></svg>
<div class="t blue" style="left:354px;top:298px">ch1-appbevm00</div>
<svg style="left:476px;top:300px" width="12" height="11" viewBox="0 0 12 11"><path d="M6 0.3 Q6.5 0.3 6.8 0.8 L11.8 9.6 Q12 10.7 11 10.7 H1 Q0 10.7 0.2 9.6 L5.2 0.8 Q5.5 0.3 6 0.3 Z" fill="#db6f00"/><rect x="5.3" y="3.3" width="1.4" height="4" fill="#fff"/><rect x="5.3" y="8.1" width="1.4" height="1.4" fill="#fff"/></svg>
<div class="t" style="left:502px;top:298px">Fired</div>
<div class="t" style="left:624px;top:297px">New</div>
<div class="t" style="left:773px;top:297px">11/28/2023, 11:00 AM</div>
<div class="abs" style="left:0;top:319px;width:861px;height:1px;background:#edebe9"></div>
</div>
<div class="abs" style="left:1141px;top:367px;width:17px;height:295px;background:#f1f1f1"></div>
<div class="abs" style="left:1143px;top:384px;width:13px;height:24px;background:#c1c1c1"></div>
<svg style="left:1145px;top:373px" width="8" height="5" viewBox="0 0 8 5"><path d="M0 5 L4 0.5 L8 5 Z" fill="#a3a3a3"/></svg>
<svg style="left:1145px;top:651px" width="8" height="5" viewBox="0 0 8 5"><path d="M0 0 L4 4.5 L8 0 Z" fill="#505050"/></svg>
<div class="abs" style="left:280px;top:662px;width:861px;height:17px;background:#f1f1f1"></div>
<div class="abs" style="left:1141px;top:662px;width:17px;height:17px;background:#dcdcdc"></div>
<div class="abs" style="left:297px;top:664px;width:757px;height:13px;background:#c1c1c1"></div>
<svg style="left:286px;top:666px" width="5" height="8" viewBox="0 0 5 8"><path d="M5 0 L0.5 4 L5 8 Z" fill="#a3a3a3"/></svg>
<svg style="left:1131px;top:666px" width="5" height="8" viewBox="0 0 5 8"><path d="M0 0 L4.5 4 L0 8 Z" fill="#505050"/></svg>
<div class="abs" style="left:280px;top:678px;width:878px;height:2px;background:#e1dfdd"></div>
<div class="t" style="left:285px;top:708px">Showing 1 - 100 of 1400 results.</div>
<svg style="left:647px;top:705px" width="11" height="18" viewBox="0 0 11 18"><path d="M10 1 L2 9 L10 17" fill="none" stroke="#a19f9d" stroke-width="1.1"/></svg>
<div class="t" style="left:681px;top:707px">1</div>
<div class="t blue" style="left:708px;top:707px">2</div>
<div class="t blue" style="left:735px;top:707px">3</div>
<div class="t blue" style="left:762px;top:707px">4</div>
<div class="t blue" style="left:789px;top:707px">5</div>
<svg style="left:820px;top:705px" width="11" height="18" viewBox="0 0 11 18"><path d="M1 1 L9 9 L1 17" fill="none" stroke="#0078d4" stroke-width="1.1"/></svg>
<svg style="left:1048px;top:705px" width="18" height="18" viewBox="0 0 18 18"><path d="M4.5 5 V0.8 H16.2 V8.5 H13.5 L11.5 10.5" fill="none" stroke="#0078d4" stroke-width="1.1"/><circle cx="6" cy="8.5" r="3" fill="none" stroke="#0078d4" stroke-width="1.1"/><path d="M0.5 17.5 Q0.5 12.2 5.8 12.2 Q11 12.2 11 17.5" fill="none" stroke="#0078d4" stroke-width="1.1"/></svg>
<div class="t blue" style="left:1072px;top:708px;font-size:12.7px">Give feedback</div>
<div class="abs" style="left:810px;top:200px;width:217px;height:123px;background:#fff;box-shadow:0 0 20px rgba(0,0,0,.26),0 0 3px rgba(0,0,0,.14)"></div>
<div class="abs" style="left:819px;top:190px;width:20px;height:20px;background:#fff;transform:rotate(45deg);box-shadow:0 0 9px rgba(0,0,0,.24)"></div>
<div class="abs" style="left:810px;top:200px;width:217px;height:16px;background:#fff"></div>
<div class="t" style="left:830px;top:214px;font-size:17.5px;line-height:22px;color:#323130;-webkit-text-stroke:0.5px #323130">User response</div>
<div class="abs" style="left:830px;top:243px;width:177px;height:24px;border:1px solid #8a3ab9;border-radius:2px;background:#fff"></div>
<div class="t" style="left:839px;top:248px">2 selected</div>
<svg style="left:985px;top:252px" width="13" height="8" viewBox="0 0 13 8"><path d="M0.5 0.5 L6.5 6.5 L12.5 0.5" fill="none" stroke="#323130" stroke-width="1"/></svg>
<div class="abs" style="left:830px;top:267px;width:177px;height:127px;background:#fff;border-radius:0 0 3px 3px;box-shadow:0 3px 8px rgba(0,0,0,.16),0 0 2px rgba(0,0,0,.1)"></div>
<div class="abs" style="left:838px;top:273px;width:20px;height:20px;border:1px solid #323130;border-radius:2px"></div><div class="abs" style="left:843px;top:278px;width:10px;height:10px;background:#0078d4"></div>
<div class="t" style="left:866px;top:276px">Select all</div>
<svg style="left:838px;top:305px" width="20" height="20" viewBox="0 0 20 20"><rect x="0" y="0" width="20" height="20" rx="2" fill="#0078d4"/><path d="M4.5 10.5 L8 14 L15.5 6.5" fill="none" stroke="#fff" stroke-width="1"/></svg>
<div class="t" style="left:866px;top:308px">New</div>
<svg style="left:838px;top:337px" width="20" height="20" viewBox="0 0 20 20"><rect x="0" y="0" width="20" height="20" rx="2" fill="#0078d4"/><path d="M4.5 10.5 L8 14 L15.5 6.5" fill="none" stroke="#fff" stroke-width="1"/></svg>
<div class="t" style="left:866px;top:340px">Acknowledged</div>
<div class="abs" style="left:838px;top:369px;width:20px;height:20px;border:1px solid #323130;border-radius:2px"></div>
<div class="t" style="left:866px;top:372px">Closed</div>
</div></body></html>
